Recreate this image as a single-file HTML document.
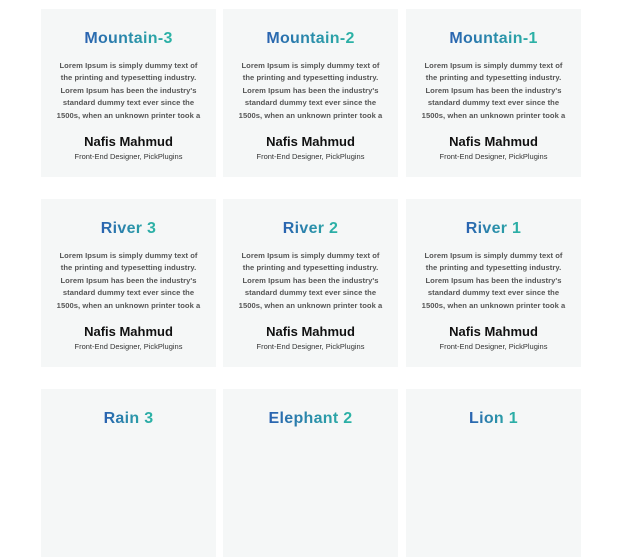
<!DOCTYPE html><html><head><style>
html,body{margin:0;width:622px;height:415px;overflow:hidden;background:#fff;font-family:"Liberation Sans",sans-serif}
.c{position:absolute;width:175px;height:168px;background:#f5f7f7;text-align:center}
.t{margin-top:19px;font-size:16px;font-weight:bold;line-height:22px;letter-spacing:0.3px;background:linear-gradient(90deg,#2a62b0,#2bb5a5);-webkit-background-clip:text;background-clip:text;color:transparent;display:inline-block}
.p{margin:10px auto 0;width:175px;font-size:7.6px;font-weight:bold;color:#555;line-height:12.4px;white-space:nowrap;letter-spacing:0.05px}
.n{margin-top:12px;font-size:13px;font-weight:bold;color:#111}
.s{margin-top:3px;font-size:7.5px;color:#333}
</style></head><body>
<div class="c" style="left:41px;top:9px"><div class="t">Mountain-3</div><div class="p">Lorem Ipsum is simply dummy text of<br>the printing and typesetting industry.<br>Lorem Ipsum has been the industry's<br>standard dummy text ever since the<br>1500s, when an unknown printer took a</div><div class="n">Nafis Mahmud</div><div class="s">Front-End Designer, PickPlugins</div></div>
<div class="c" style="left:223px;top:9px"><div class="t">Mountain-2</div><div class="p">Lorem Ipsum is simply dummy text of<br>the printing and typesetting industry.<br>Lorem Ipsum has been the industry's<br>standard dummy text ever since the<br>1500s, when an unknown printer took a</div><div class="n">Nafis Mahmud</div><div class="s">Front-End Designer, PickPlugins</div></div>
<div class="c" style="left:406px;top:9px"><div class="t">Mountain-1</div><div class="p">Lorem Ipsum is simply dummy text of<br>the printing and typesetting industry.<br>Lorem Ipsum has been the industry's<br>standard dummy text ever since the<br>1500s, when an unknown printer took a</div><div class="n">Nafis Mahmud</div><div class="s">Front-End Designer, PickPlugins</div></div>
<div class="c" style="left:41px;top:199px"><div class="t">River 3</div><div class="p">Lorem Ipsum is simply dummy text of<br>the printing and typesetting industry.<br>Lorem Ipsum has been the industry's<br>standard dummy text ever since the<br>1500s, when an unknown printer took a</div><div class="n">Nafis Mahmud</div><div class="s">Front-End Designer, PickPlugins</div></div>
<div class="c" style="left:223px;top:199px"><div class="t">River 2</div><div class="p">Lorem Ipsum is simply dummy text of<br>the printing and typesetting industry.<br>Lorem Ipsum has been the industry's<br>standard dummy text ever since the<br>1500s, when an unknown printer took a</div><div class="n">Nafis Mahmud</div><div class="s">Front-End Designer, PickPlugins</div></div>
<div class="c" style="left:406px;top:199px"><div class="t">River 1</div><div class="p">Lorem Ipsum is simply dummy text of<br>the printing and typesetting industry.<br>Lorem Ipsum has been the industry's<br>standard dummy text ever since the<br>1500s, when an unknown printer took a</div><div class="n">Nafis Mahmud</div><div class="s">Front-End Designer, PickPlugins</div></div>
<div class="c" style="left:41px;top:389px"><div class="t">Rain 3</div></div>
<div class="c" style="left:223px;top:389px"><div class="t">Elephant 2</div></div>
<div class="c" style="left:406px;top:389px"><div class="t">Lion 1</div></div>
</body></html>
